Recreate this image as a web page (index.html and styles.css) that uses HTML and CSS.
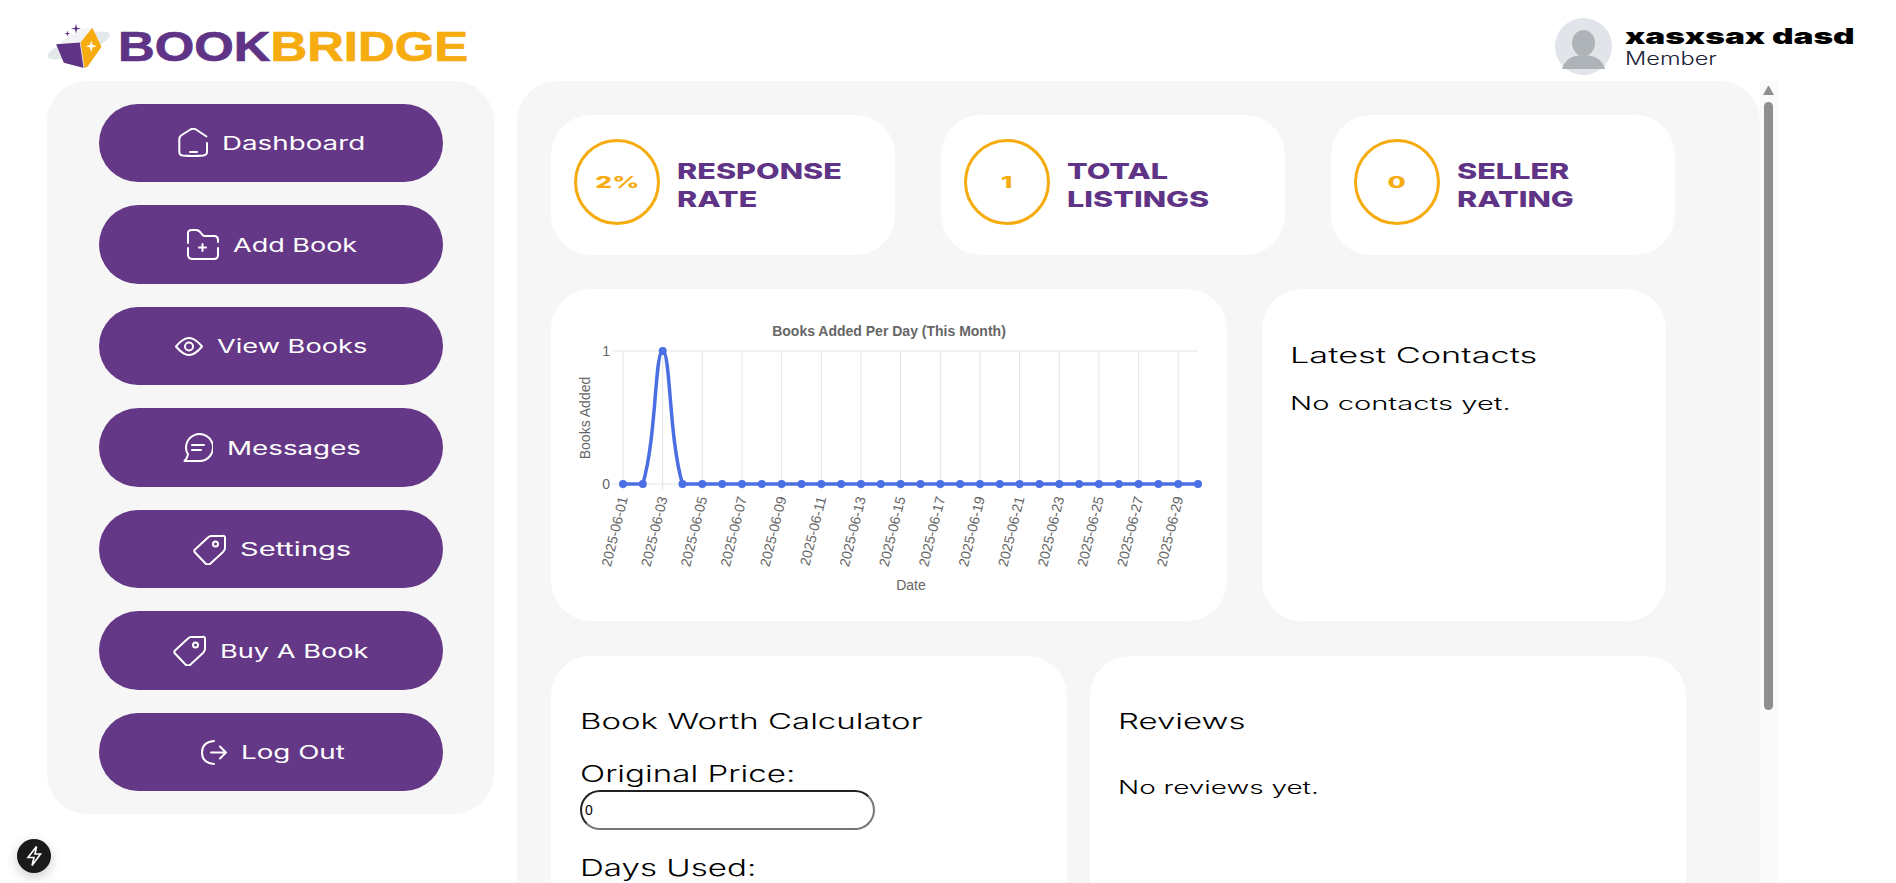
FILE: index.html

```html
<!DOCTYPE html>
<html>
<head>
    <title>BookBridge Dashboard</title>
    <link rel="stylesheet" href="styles.css">
</head>
<body>
    <header class="topbar">
        <div class="logo">
            <svg class="logo-mark" viewBox="50 40 195 145">
                <ellipse cx="145" cy="108" rx="100" ry="26" transform="rotate(-20 145 108)" fill="#e3e8ea"/>
                <path d="M80 100 L165 56 L186 54 L150 100 Z" fill="#f2f3f4"/>
                <path d="M77 104 L150 99 L161 176 L100 160 Z" fill="#5f3386"/>
                <path d="M186 54 L214 112 L172 172 L161 176 L150 100 Z" fill="#f6ab0e"/>
                <path d="M150 100 L161 176" stroke="#d9d4e2" stroke-width="3"/>
                <path d="M183 93 L187 106 L200 110 L187 114 L183 128 L179 114 L166 110 L179 106 Z" fill="#fff"/>
                <path d="M137 42 L140 54 L152 57 L140 60 L137 72 L134 60 L122 57 L134 54 Z" fill="#5f3386"/>
                <path d="M111 63 L113 70 L120 72 L113 74 L111 81 L109 74 L102 72 L109 70 Z" fill="#5f3386"/>
            </svg>
            <div class="logo-text"><span class="logo-book">BOOK</span><span class="logo-bridge">BRIDGE</span></div>
        </div>
        <div class="user">
            <svg class="avatar" viewBox="0 0 57 57">
                <circle cx="28.5" cy="28.5" r="28.5" fill="#e1e5e9"/>
                <ellipse cx="28.5" cy="25" rx="11.5" ry="13" fill="#aeb3b7"/>
                <path d="M7 51 Q11 37 28.5 37 Q46 37 50 51 Z" fill="#aeb3b7"/>
            </svg>
            <div class="user-text">
                <div class="user-name"><span class="wide">xasxsax dasd</span></div>
                <div class="user-role"><span class="wide">Member</span></div>
            </div>
        </div>
    </header>

    <div class="layout">
        <nav class="sidebar">
            <a class="nav-item">
                <svg class="icon" width="30" height="30" viewBox="0 0 30 30"><path d="M28.5 8.5 L18 1.5 Q15.3 0 12.5 1.5 L3 7.5 Q1.3 9 1.3 11.5 V24 Q1.3 27 4.5 27.5 Q15 28.5 25 27.5 Q29 27 29 24 V15 M12 24 H19"/></svg>
                <span class="nav-label w-dashboard"><span class="wide">Dashboard</span></span>
            </a>
            <a class="nav-item">
                <svg class="icon" width="32" height="31" viewBox="0 0 32 31"><path d="M1 14 V4 Q1 1 5 1 H9 Q12 1 14 4 L15.5 6 Q16.5 7 18 7 H27 Q31 7 31 11 V13 M31 19 V26 Q31 30 27 30 H6 Q1 30 1 26 V19 M15.5 15 V22 M12 18.5 H19"/></svg>
                <span class="nav-label w-add"><span class="wide">Add Book</span></span>
            </a>
            <a class="nav-item">
                <svg class="icon" width="28" height="19" viewBox="0 0 28 19"><path d="M1 9.5 Q8 1 14 1 Q20 1 27 9.5 Q20 18 14 18 Q8 18 1 9.5 Z"/><circle cx="14" cy="9.5" r="4"/></svg>
                <span class="nav-label w-view"><span class="wide">View Books</span></span>
            </a>
            <a class="nav-item">
                <svg class="icon" width="30" height="29" viewBox="0 0 30 29"><path d="M5 21.5 A13.5 13.5 0 1 1 16 28 H1.5 Q4 25.5 5 21.5 Z M9 12 H21 M9 17 H18"/></svg>
                <span class="nav-label w-messages"><span class="wide">Messages</span></span>
            </a>
            <a class="nav-item">
                <svg class="icon" width="33" height="31" viewBox="0 0 33 31"><path d="M18 2 H29 Q32 1 32 4 V14 Q32 16 30 18 L17 30 Q15 31 13 30 L2 18.5 Q0.5 17 2 15.5 L15 3.5 Q16.5 2 18 2 Z"/><circle cx="22.5" cy="10" r="2.5"/></svg>
                <span class="nav-label w-settings"><span class="wide">Settings</span></span>
            </a>
            <a class="nav-item">
                <svg class="icon" width="33" height="31" viewBox="0 0 33 31"><path d="M18 2 H29 Q32 1 32 4 V14 Q32 16 30 18 L17 30 Q15 31 13 30 L2 18.5 Q0.5 17 2 15.5 L15 3.5 Q16.5 2 18 2 Z"/><circle cx="22.5" cy="10" r="2.5"/></svg>
                <span class="nav-label w-buy"><span class="wide">Buy A Book</span></span>
            </a>
            <a class="nav-item">
                <svg class="icon" width="26" height="25" viewBox="0 0 26 25"><path d="M13 1 Q1 2 1 12.5 Q1 23 13 24 M10 12.5 H25 M19 6.5 L25 12.5 L19 18.5"/></svg>
                <span class="nav-label w-logout"><span class="wide">Log Out</span></span>
            </a>
        </nav>

        <main class="panel">
            <section class="stats">
                <div class="card stat">
                    <div class="stat-circle"><span class="stat-value">2%</span></div>
                    <div class="stat-title"><span class="wide">RESPONSE</span><br><span class="wide">RATE</span></div>
                </div>
                <div class="card stat">
                    <div class="stat-circle"><span class="stat-value">1</span></div>
                    <div class="stat-title"><span class="wide">TOTAL</span><br><span class="wide">LISTINGS</span></div>
                </div>
                <div class="card stat">
                    <div class="stat-circle"><span class="stat-value">0</span></div>
                    <div class="stat-title"><span class="wide">SELLER</span><br><span class="wide">RATING</span></div>
                </div>
            </section>

            <section class="row-middle">
                <div class="card chart-card">
                    <svg class="chart" width="676" height="332" viewBox="0 0 676 332">
                        <path class="grid" d="M72 62V201 M111.7 62V201 M151.3 62V201 M191 62V201 M230.6 62V201 M270.3 62V201 M310 62V201 M349.6 62V201 M389.3 62V201 M429 62V201 M468.6 62V201 M508.3 62V201 M547.9 62V201 M587.6 62V201 M627.3 62V201 M62 62H647 M62 195H647"/>
                        <text class="chart-title" x="338" y="47" text-anchor="middle">Books Added Per Day (This Month)</text>
                        <text class="tick" x="59" y="67" text-anchor="end">1</text>
                        <text class="tick" x="59" y="200" text-anchor="end">0</text>
                        <text class="tick" transform="translate(39 129) rotate(-90)" text-anchor="middle">Books Added</text>
                        <text class="tick" x="360" y="301" text-anchor="middle">Date</text>
                        <path class="line" d="M72 195 L91.8 195 C105.6 148.6 103.8 62 111.7 62 C119.6 62 117.7 148.6 131.5 195 L647 195"/>
                        <path class="dots" d="M72 195h0 M91.8 195h0 M111.7 62h0 M131.5 195h0 M151.3 195h0 M171.2 195h0 M191 195h0 M210.8 195h0 M230.6 195h0 M250.5 195h0 M270.3 195h0 M290.1 195h0 M310 195h0 M329.8 195h0 M349.6 195h0 M369.5 195h0 M389.3 195h0 M409.1 195h0 M429 195h0 M448.8 195h0 M468.6 195h0 M488.4 195h0 M508.3 195h0 M528.1 195h0 M547.9 195h0 M567.8 195h0 M587.6 195h0 M607.4 195h0 M627.3 195h0 M647 195h0"/>
                        <text class="tick" transform="translate(77 209) rotate(-76)" text-anchor="end">2025-06-01</text>
                        <text class="tick" transform="translate(116.7 209) rotate(-76)" text-anchor="end">2025-06-03</text>
                        <text class="tick" transform="translate(156.3 209) rotate(-76)" text-anchor="end">2025-06-05</text>
                        <text class="tick" transform="translate(196 209) rotate(-76)" text-anchor="end">2025-06-07</text>
                        <text class="tick" transform="translate(235.6 209) rotate(-76)" text-anchor="end">2025-06-09</text>
                        <text class="tick" transform="translate(275.3 209) rotate(-76)" text-anchor="end">2025-06-11</text>
                        <text class="tick" transform="translate(315 209) rotate(-76)" text-anchor="end">2025-06-13</text>
                        <text class="tick" transform="translate(354.6 209) rotate(-76)" text-anchor="end">2025-06-15</text>
                        <text class="tick" transform="translate(394.3 209) rotate(-76)" text-anchor="end">2025-06-17</text>
                        <text class="tick" transform="translate(434 209) rotate(-76)" text-anchor="end">2025-06-19</text>
                        <text class="tick" transform="translate(473.6 209) rotate(-76)" text-anchor="end">2025-06-21</text>
                        <text class="tick" transform="translate(513.3 209) rotate(-76)" text-anchor="end">2025-06-23</text>
                        <text class="tick" transform="translate(552.9 209) rotate(-76)" text-anchor="end">2025-06-25</text>
                        <text class="tick" transform="translate(592.6 209) rotate(-76)" text-anchor="end">2025-06-27</text>
                        <text class="tick" transform="translate(632.3 209) rotate(-76)" text-anchor="end">2025-06-29</text>
                    </svg>
                </div>
                <div class="card contacts">
                    <h3 class="card-heading"><span class="wide">Latest Contacts</span></h3>
                    <p class="card-text"><span class="wide">No contacts yet.</span></p>
                </div>
            </section>

            <section class="row-bottom">
                <div class="card calculator">
                    <h3 class="card-heading"><span class="wide">Book Worth Calculator</span></h3>
                    <label class="field-label"><span class="wide">Original Price:</span></label>
                    <input class="field" type="text" value="0">
                    <label class="field-label days"><span class="wide">Days Used:</span></label>
                </div>
                <div class="card reviews">
                    <h3 class="card-heading"><span class="wide">Reviews</span></h3>
                    <p class="card-text reviews-text"><span class="wide">No reviews yet.</span></p>
                </div>
            </section>
        </main>

        <div class="scrollbar">
            <div class="scroll-up"></div>
            <div class="scroll-thumb"></div>
        </div>
    </div>

    <div class="dev-badge">
        <svg width="20" height="22" viewBox="0 0 20 22"><path d="M12.5 1.5 L4 12.5 H10 L8 20.5 L16.5 9 H11 Z"/></svg>
    </div>
</body>
</html>
```

FILE: styles.css

```css
* {
    box-sizing: border-box;
}
html, body {
    height: 100%;
}
body {
    margin: 0;
    height: 883px;
    overflow: hidden;
    background-color: #fff;
    font-family: Inter, "Liberation Sans", sans-serif;
    color: #000;
}
.wide {
    display: inline-block;
    white-space: nowrap;
    transform: scaleX(1.5);
    transform-origin: left;
}

/* top bar */
.topbar {
    height: 81px;
    padding: 0 43px 0 47px;
    display: flex;
    justify-content: space-between;
    align-items: flex-start;
}
.logo {
    display: flex;
    align-items: flex-start;
    gap: 6px;
    padding-top: 23px;
}
.logo-mark {
    width: 65px;
    height: 48px;
}
.logo-text {
    font-family: "Liberation Sans", sans-serif;
    font-weight: 700;
    font-size: 42px;
    line-height: 48px;
    white-space: nowrap;
    transform: scaleX(1.21);
    transform-origin: left;
    -webkit-text-stroke: 0.7px;
}
.logo-book {
    color: #5f3386;
}
.logo-bridge {
    color: #f6ab0e;
}
.user {
    display: flex;
    gap: 13px;
    padding-top: 18px;
}
.avatar {
    width: 57px;
    height: 57px;
}
.user-text {
    width: 228px;
    padding-top: 6px;
}
.user-name {
    font-size: 22px;
    font-weight: 900;
    line-height: 24px;
}
.user-name .wide {
    transform: scaleX(1.52);
}
.user-role {
    font-size: 18px;
    font-weight: 300;
    line-height: 22px;
    color: #1a2238;
}
.user-role .wide {
    transform: scaleX(1.31);
}

/* main layout */
.layout {
    display: flex;
    align-items: flex-start;
    padding-left: 47px;
    gap: 23px;
}
.sidebar {
    width: 447px;
    padding: 23px 51px 23px 52px;
    background-color: #f6f6f6;
    border-radius: 40px;
    display: flex;
    flex-direction: column;
    gap: 23.2px;
}
.nav-item {
    height: 78.3px;
    background-color: #643886;
    border-radius: 40px;
    color: #fff;
    display: flex;
    align-items: center;
    justify-content: center;
    gap: 14px;
    font-size: 18.5px;
}
.icon {
    fill: none;
    stroke: #fff;
    stroke-width: 2;
    stroke-linecap: round;
    stroke-linejoin: round;
    flex: none;
}
.w-dashboard { width: 143px; }
.w-add { width: 122px; }
.w-view { width: 150px; }
.w-messages { width: 133px; }
.w-settings { width: 110px; }
.w-buy { width: 149px; }
.w-logout { width: 101px; }
.w-add .wide { transform: scaleX(1.46); }
.w-view .wide { transform: scaleX(1.47); }
.w-settings .wide { transform: scaleX(1.57); }
.w-buy .wide { transform: scaleX(1.47); }

.panel {
    width: 1243px;
    height: 802px;
    padding: 34px 0 0 34px;
    background-color: #f6f6f6;
    border-radius: 40px 40px 0 0;
    overflow: hidden;
}
.card {
    background-color: #fff;
    border-radius: 40px;
}
.stats {
    display: flex;
    gap: 46px;
    margin-bottom: 34px;
}
.stat {
    width: 344px;
    height: 140px;
    padding: 0 23px;
    display: flex;
    align-items: center;
    gap: 17px;
}
.stat-circle {
    width: 86px;
    height: 86px;
    flex: none;
    margin-bottom: 7px;
    border: 3.5px solid #f6ab0e;
    border-radius: 50%;
    color: #f6ab0e;
    font-weight: 800;
    font-size: 16px;
    display: flex;
    align-items: center;
    justify-content: center;
}
.stat-value {
    display: inline-block;
    transform: scaleX(1.65);
}
.stat-title {
    color: #5f3386;
    font-weight: 800;
    font-size: 22px;
    line-height: 28px;
}
.stat-title .wide {
    transform: scaleX(1.39);
}
.row-middle {
    display: flex;
    gap: 35px;
    margin-bottom: 35px;
}
.chart-card {
    width: 676px;
    height: 332px;
}
.chart {
    display: block;
}
.grid {
    fill: none;
    stroke: #e4e4e4;
    stroke-width: 1;
}
.chart-title {
    font-family: "Liberation Sans", sans-serif;
    font-size: 14px;
    font-weight: 700;
    fill: #666;
}
.tick {
    font-family: "Liberation Sans", sans-serif;
    font-size: 14px;
    fill: #666;
}
.line {
    fill: none;
    stroke: #4a6fe3;
    stroke-width: 3.5;
}
.dots {
    fill: none;
    stroke: #4a6fe3;
    stroke-width: 8;
    stroke-linecap: round;
}
.contacts {
    width: 404px;
    height: 332px;
    padding: 52px 28px;
}
.card-heading {
    margin: 0;
    font-size: 22px;
    font-weight: 300;
    line-height: 28px;
}
.contacts .card-heading .wide {
    transform: scaleX(1.56);
}
.card-text {
    margin: 23px 0 0;
    font-size: 18px;
    font-weight: 300;
    line-height: 24px;
}
.card-text .wide {
    transform: scaleX(1.55);
}
.contacts .card-text .wide {
    transform: scaleX(1.62);
}
.row-bottom {
    display: flex;
    gap: 23px;
}
.calculator {
    width: 516px;
    height: 400px;
    padding: 51px 29px;
}
.calculator .card-heading {
    margin-bottom: 25px;
}
.field-label {
    display: block;
    font-size: 23px;
    font-weight: 300;
    line-height: 29px;
}
.field-label .wide {
    transform: scaleX(1.44);
}
.field {
    display: block;
    width: 295px;
    height: 40px;
    margin-top: 1px;
    border: 2px inset #767676;
    border-radius: 20px;
    padding: 1px 3px;
    font-family: "Liberation Sans", sans-serif;
    font-size: 14px;
    background: #fff;
}
.days {
    margin-top: 24px;
}
.reviews {
    width: 596px;
    height: 400px;
    padding: 51px 28px;
}
.reviews-text {
    margin-top: 41px;
}

/* scrollbar drawn by hand */
.scrollbar {
    width: 17px;
    height: 802px;
    margin-left: -23px;
    background-color: #fafafa;
    padding: 5px 4px 0;
}
.scroll-up {
    width: 11px;
    margin: 0 0 7px -1px;
    border-left: 5.5px solid transparent;
    border-right: 5.5px solid transparent;
    border-bottom: 9px solid #8f8f8f;
}
.scroll-thumb {
    width: 9px;
    height: 608px;
    background-color: #8f8f8f;
    border-radius: 5px;
}

.dev-badge {
    position: absolute;
    left: 17px;
    top: 839px;
    width: 34px;
    height: 34px;
    border-radius: 50%;
    background-color: #1a1a1a;
    box-shadow: 0 4px 12px rgba(0, 0, 0, 0.2);
    display: flex;
    align-items: center;
    justify-content: center;
}
.dev-badge path {
    fill: none;
    stroke: #fff;
    stroke-width: 1.6;
}
```
